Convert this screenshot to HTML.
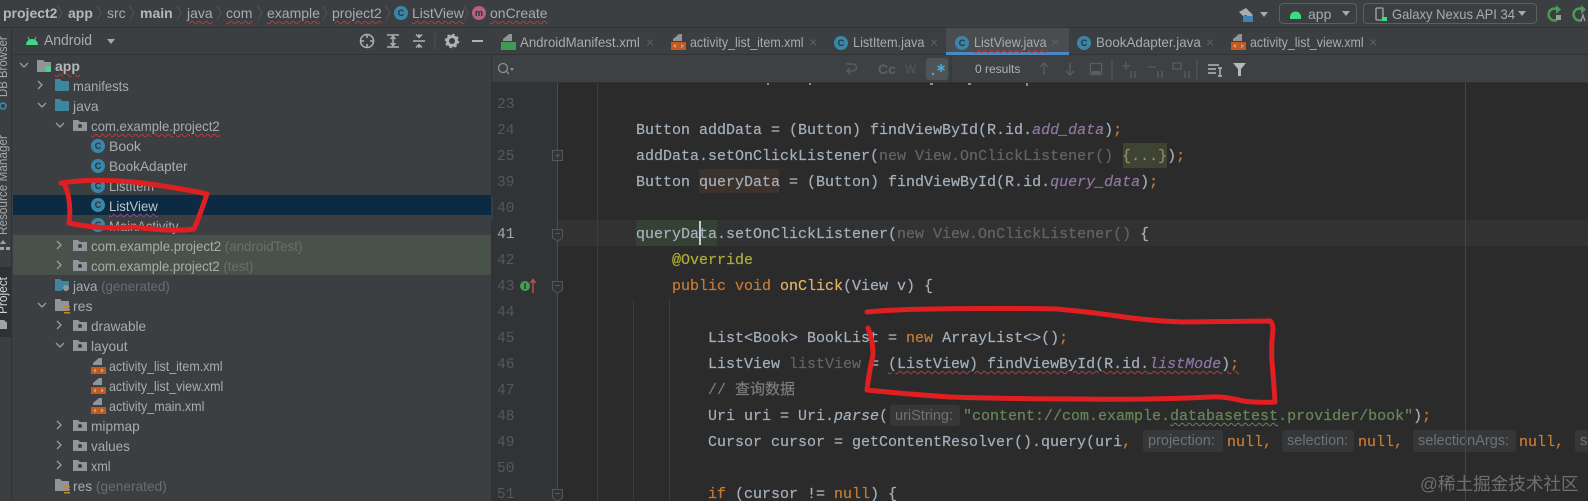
<!DOCTYPE html>
<html><head><meta charset="utf-8"><style>
*{box-sizing:border-box}
html{margin:0;padding:0;background:#3c3f41;width:1588px;height:501px;overflow:hidden}
body{margin:0;padding:0;background:#3c3f41;width:1588px;height:501px;overflow:hidden;position:relative;font-family:"Liberation Sans","Noto Sans CJK SC",sans-serif;font-size:13px;color:#b4b8ba}
.a{position:absolute;white-space:pre}
.bc{position:absolute;top:5px;line-height:16px;font-size:14px;color:#a8acae;white-space:pre}
.bc.b{font-weight:bold;color:#b4b8ba}
.w{text-decoration:underline wavy #b93a3a 1px;text-underline-offset:2px}
.r{position:absolute;line-height:20px;white-space:pre;font-size:14px;color:#a8acae;transform-origin:0 50%}
.g{color:#6a6e70}
.tab{position:absolute;top:33px;line-height:18px;font-size:14px;color:#a8acae;white-space:pre;transform-origin:0 50%}
.x{position:absolute;top:34px;color:#5d6062;font-size:14px;line-height:16px}
.c{position:absolute;left:0;top:0;font-family:"Liberation Mono","Noto Sans CJK SC",monospace;font-size:15px;line-height:26px;height:26px;color:#a4b0bc;white-space:pre;-webkit-text-stroke:.2px}
.k{color:#c67c38}.p{color:#8f77a5;font-style:italic}.s{color:#6a8759}.m{color:#e3b368}.an{color:#aeae3a}.d{color:#626466}.cm{color:#7c7c7c}.i{font-style:italic}
.n{position:absolute;left:497px;font-family:"Liberation Mono",monospace;font-size:14.5px;line-height:26px;color:#55595b}
.h{position:absolute;background:#353738;color:#6f7375;font:14.5px/22px "Liberation Sans",sans-serif;border-radius:3px;white-space:pre;height:22px;padding-left:5px}
.ci{position:absolute;width:14px;height:14px;border-radius:50%;background:#3a86a8;color:#27333a;font:bold 9px/14px "Liberation Sans",sans-serif;text-align:center}
svg{position:absolute;left:0;top:0}
</style></head><body>

<!-- panels -->
<div class="a" style="left:0;top:0;width:1588px;height:28px;background:#3c3f41;border-bottom:1px solid #323232"></div>
<div class="a" style="left:0;top:28px;width:12px;height:473px;background:#3c3f41;border-right:1px solid #323232"></div>
<div class="a" style="left:0;top:267px;width:12px;height:70px;background:#2f3133"></div>
<div class="a" style="left:13px;top:54px;width:478px;height:1px;background:#323232"></div>
<div class="a" style="left:13px;top:195px;width:478px;height:20px;background:#0c2a42"></div>
<div class="a" style="left:13px;top:235px;width:478px;height:40px;background:#49524a"></div>
<div class="a" style="left:491px;top:28px;width:1097px;height:473px;background:#2b2b2b;border-left:1px solid #323232"></div>
<div class="a" style="left:491px;top:28px;width:1097px;height:27px;background:#3c3f41;border-bottom:1px solid #323232"></div>
<div class="a" style="left:946px;top:28px;width:123px;height:27px;background:#4a4d4f;border-bottom:3px solid #4a88c7"></div>
<div class="a" style="left:492px;top:55px;width:1096px;height:28px;background:#3e4143;border-bottom:1px solid #323232"></div>
<div class="a" style="left:492px;top:83px;width:65px;height:418px;background:#313335"></div>
<div class="a" style="left:557px;top:220px;width:1031px;height:26px;background:#323232"></div>
<div class="a" style="left:636px;top:220px;width:81px;height:26px;background:#344134"></div>
<div class="a" style="left:699px;top:221px;width:1.5px;height:24px;background:#c9ccce"></div>
<div class="a" style="left:699px;top:169px;width:80px;height:24px;background:#3c312b"></div>
<div class="a" style="left:1123px;top:143px;width:44px;height:25px;background:#3f4334"></div>
<div class="a" style="left:557px;top:83px;width:1px;height:418px;background:#4a4c4e"></div>
<div class="a" style="left:597px;top:83px;width:1px;height:418px;background:#3b3d3e"></div>
<div class="a" style="left:633px;top:300px;width:1px;height:201px;background:#3b3d3e"></div>
<div class="a" style="left:669px;top:298px;width:1px;height:203px;background:#3b3d3e"></div>

<!-- breadcrumb -->
<span class="bc b" style="left:3px">project2</span>
<span class="bc b" style="left:68px">app</span>
<span class="bc" style="left:107px">src</span>
<span class="bc b" style="left:140px">main</span>
<span class="bc" style="left:187px"><span class="w">java</span></span>
<span class="bc" style="left:226px"><span class="w">com</span></span>
<span class="bc" style="left:267px"><span class="w">example</span></span>
<span class="bc" style="left:332px"><span class="w">project2</span></span>
<div class="ci" style="left:394px;top:6px">C</div>
<span class="bc" style="left:412px"><span class="w">ListView</span></span>
<div class="ci" style="left:472px;top:6px;background:#b5617b">m</div>
<span class="bc" style="left:490px"><span class="w">onCreate</span></span>

<!-- left strip -->
<div class="a" style="left:-3px;top:97px;transform-origin:0 0;transform:rotate(-90deg) scaleX(.91);font-size:12.5px;line-height:12px;color:#a4a8aa">DB Browser</div>
<div class="a" style="left:-3px;top:235px;transform-origin:0 0;transform:rotate(-90deg) scaleX(.94);font-size:12.5px;line-height:12px;color:#a4a8aa">Resource Manager</div>
<div class="a" style="left:-3px;top:314px;transform-origin:0 0;transform:rotate(-90deg) scaleX(.95);font-size:12.5px;line-height:12px;color:#d0d2d4">Project</div>

<!-- tool window header -->
<span class="a" style="left:44px;top:32px;font-size:14.5px;line-height:18px;color:#a8acae;transform-origin:0 50%;transform:scaleX(.96)">Android</span>

<!-- tree -->
<span class="r" style="left:55px;top:56px;font-weight:bold;color:#b4b8ba"><span class="w">app</span></span>
<span class="r" style="left:73px;top:76px;transform:scaleX(.93)">manifests</span>
<span class="r" style="left:73px;top:96px">java</span>
<span class="r" style="left:91px;top:116px;transform:scaleX(.94)"><span class="w">com.example.project2</span></span>
<span class="r" style="left:109px;top:136px">Book</span>
<span class="r" style="left:109px;top:156px;transform:scaleX(.97)">BookAdapter</span>
<span class="r" style="left:109px;top:176px;transform:scaleX(.92)">ListItem</span>
<span class="r" style="left:109px;top:196px;color:#c2c6c8;transform:scaleX(.94)"><span style="text-decoration:underline wavy #8e4a7a 1px;text-underline-offset:2px">ListView</span></span>
<span class="r" style="left:109px;top:216px;transform:scaleX(.93)">MainActivity</span>
<span class="r" style="left:91px;top:236px;transform:scaleX(.95)">com.example.project2 <span class="g">(androidTest)</span></span>
<span class="r" style="left:91px;top:256px;transform:scaleX(.94)">com.example.project2 <span class="g">(test)</span></span>
<span class="r" style="left:73px;top:276px;transform:scaleX(.95)">java <span class="g">(generated)</span></span>
<span class="r" style="left:73px;top:296px">res</span>
<span class="r" style="left:91px;top:316px;transform:scaleX(.97)">drawable</span>
<span class="r" style="left:91px;top:336px;transform:scaleX(.98)">layout</span>
<span class="r" style="left:109px;top:356px;transform:scaleX(.89)">activity_list_item.xml</span>
<span class="r" style="left:109px;top:376px;transform:scaleX(.89)">activity_list_view.xml</span>
<span class="r" style="left:109px;top:396px;transform:scaleX(.895)">activity_main.xml</span>
<span class="r" style="left:91px;top:416px;transform:scaleX(.98)">mipmap</span>
<span class="r" style="left:91px;top:436px;transform:scaleX(.96)">values</span>
<span class="r" style="left:91px;top:456px;transform:scaleX(.9)">xml</span>
<span class="r" style="left:73px;top:476px;transform:scaleX(.98)">res <span class="g">(generated)</span></span>
<div class="a" style="left:73px;top:496px;width:120px;height:5px;overflow:hidden;font-size:14px;line-height:20px;color:#a8acae">Gradle Scripts</div>

<div class="ci" style="left:91px;top:139px">C</div>
<div class="ci" style="left:91px;top:159px">C</div>
<div class="ci" style="left:91px;top:179px">C</div>
<div class="ci" style="left:91px;top:198px">C</div>
<div class="ci" style="left:91px;top:218px">C</div>

<!-- tabs -->
<span class="tab" style="left:520px;transform:scaleX(.945)">AndroidManifest.xml</span><span class="x" style="left:646px">×</span>
<span class="tab" style="left:690px;transform:scaleX(.89)">activity_list_item.xml</span><span class="x" style="left:809px">×</span>
<div class="ci" style="left:834px;top:36px">C</div><span class="tab" style="left:853px;transform:scaleX(.91)">ListItem.java</span><span class="x" style="left:930px">×</span>
<div class="ci" style="left:955px;top:36px">C</div><span class="tab" style="left:974px;transform:scaleX(.9)"><span class="w">ListView.java</span></span><span class="x" style="left:1051px">×</span>
<div class="ci" style="left:1077px;top:36px">C</div><span class="tab" style="left:1096px;transform:scaleX(.955)">BookAdapter.java</span><span class="x" style="left:1206px">×</span>
<span class="tab" style="left:1250px;transform:scaleX(.885)">activity_list_view.xml</span><span class="x" style="left:1369px">×</span>

<!-- right toolbar -->
<div class="a" style="left:1279px;top:3px;width:78px;height:21px;border:1px solid #5c5f61;border-radius:4px"></div>
<div class="a" style="left:1363px;top:3px;width:174px;height:21px;border:1px solid #5c5f61;border-radius:4px"></div>
<span class="a" style="left:1308px;top:5px;font-size:14px;line-height:18px;color:#a8acae">app</span>
<span class="a" style="left:1392px;top:5px;font-size:14px;line-height:18px;color:#a8acae;transform-origin:0 50%;transform:scaleX(.93)">Galaxy Nexus API 34</span>

<!-- find bar -->
<span class="a" style="left:878px;top:60px;font-size:14px;font-weight:bold;line-height:18px;color:#5c6062">Cc</span>
<span class="a" style="left:905px;top:60px;font-size:12px;font-weight:bold;line-height:18px;color:#4f5355">W</span>
<div class="a" style="left:926px;top:58px;width:22px;height:22px;background:#505456;border-radius:3px"></div>
<span class="a" style="left:975px;top:61px;font-size:12px;line-height:17px;color:#b0b4b6">0 results</span>

<!-- line numbers -->
<div class="n" style="top:92px">23</div><div class="n" style="top:118px">24</div><div class="n" style="top:144px">25</div>
<div class="n" style="top:170px">39</div><div class="n" style="top:196px">40</div>
<div class="n" style="top:222px;color:#a4a8aa">41</div>
<div class="n" style="top:248px">42</div><div class="n" style="top:274px">43</div><div class="n" style="top:300px">44</div>
<div class="n" style="top:326px">45</div><div class="n" style="top:352px">46</div><div class="n" style="top:378px">47</div>
<div class="n" style="top:404px">48</div><div class="n" style="top:430px">49</div><div class="n" style="top:456px">50</div><div class="n" style="top:482px">51</div>

<!-- code -->
<div class="c" style="left:636px;top:118px">Button addData = (Button) findViewById(R.id.<span class="p">add_data</span>)<span class="k">;</span></div>
<div class="c" style="left:636px;top:144px">addData.setOnClickListener(<span class="d">new View.OnClickListener() </span><span style="color:#8a8f6a">{...}</span>)<span class="k">;</span></div>
<div class="c" style="left:636px;top:170px">Button queryData = (Button) findViewById(R.id.<span class="p">query_data</span>)<span class="k">;</span></div>
<div class="c" style="left:636px;top:222px">queryData.setOnClickListener(<span class="d">new View.OnClickListener() </span>{</div>
<div class="c an" style="left:672px;top:248px">@Override</div>
<div class="c" style="left:672px;top:274px"><span class="k">public void </span><span class="m">onClick</span>(View v) {</div>
<div class="c" style="left:708px;top:326px">List&lt;Book&gt; BookList = <span class="k">new </span>ArrayList&lt;&gt;()<span class="k">;</span></div>
<div class="c" style="left:708px;top:352px">ListView <span class="d">listView</span> = <span style="text-decoration:underline wavy #b93a3a 1px;text-underline-offset:2px">(ListView) findViewById(R.id.<span class="p">listMode</span>)<span class="k">;</span></span></div>
<div class="c cm" style="left:708px;top:378px">// 查询数据</div>
<div class="c" style="left:708px;top:404px">Uri uri = Uri.<span class="i">parse</span>(</div>
<div class="h" style="left:890px;top:405px;width:70px;height:21px">uriString:</div>
<div class="c" style="left:963px;top:404px"><span class="s">"content://com.example.<span style="text-decoration:underline wavy #6f7f55 1px;text-underline-offset:2px">databasetest</span>.provider/book"</span>)<span class="k">;</span></div>
<div class="c" style="left:708px;top:430px">Cursor cursor = getContentResolver().query(uri<span class="k">,</span></div>
<div class="h" style="left:1143px;top:430px;width:80px">projection:</div>
<div class="c k" style="left:1227px;top:430px">null,</div>
<div class="h" style="left:1282px;top:430px;width:72px">selection:</div>
<div class="c k" style="left:1358px;top:430px">null,</div>
<div class="h" style="left:1413px;top:430px;width:103px">selectionArgs:</div>
<div class="c k" style="left:1519px;top:430px">null,</div>
<div class="h" style="left:1575px;top:430px;width:13px;overflow:hidden">se</div>
<div class="c" style="left:708px;top:482px;height:19px;overflow:hidden"><span class="k">if</span> (cursor != <span class="k">null</span>) {</div>
<div class="a" style="left:1465px;top:83px;width:1px;height:418px;background:#444648"></div>

<span class="a" style="left:1420px;top:473px;font-size:17.6px;line-height:22px;color:#6d6f71;font-family:'Liberation Sans','Noto Sans CJK SC',sans-serif">@稀土掘金技术社区</span>

<svg width="1588" height="501" viewBox="0 0 1588 501" fill="none">
<!-- breadcrumb chevrons -->
<path d="M58 6l4 7-4 7M97 6l4 7-4 7M130 6l4 7-4 7M177 6l4 7-4 7M217 6l4 7-4 7M258 6l4 7-4 7M323 6l4 7-4 7M386 6l4 7-4 7M464 6l4 7-4 7" stroke="#525557"/>
<!-- tree chevrons -->
<g stroke="#9a9ea0" stroke-width="1.3">
<path d="M20 63l4 4 4-4M38 81l4 4-4 4M38 103l4 4 4-4M56 123l4 4 4-4M57 241l4 4-4 4M57 261l4 4-4 4M38 303l4 4 4-4M57 321l4 4-4 4M56 343l4 4 4-4M57 421l4 4-4 4M57 441l4 4-4 4M57 461l4 4-4 4"/>
</g>
<!-- folders -->
<g fill="#8f9599">
<path d="M37 60h6l2 2h6v10h-14z"/>
<path d="M73 120h5l2 2h7v9H73zM73 240h5l2 2h7v9H73zM73 260h5l2 2h7v9H73zM73 320h5l2 2h7v9H73zM73 340h5l2 2h7v9H73zM73 420h5l2 2h7v9H73zM73 440h5l2 2h7v9H73zM73 460h5l2 2h7v9H73z"/>
<path d="M55 299h5l2 2h7v10H55zM55 479h5l2 2h7v10H55z"/>
</g>
<g fill="#3c3f41"><circle cx="80" cy="126" r="2"/><circle cx="80" cy="246" r="2"/><circle cx="80" cy="266" r="2"/><circle cx="80" cy="326" r="2"/><circle cx="80" cy="346" r="2"/><circle cx="80" cy="426" r="2"/><circle cx="80" cy="446" r="2"/><circle cx="80" cy="466" r="2"/></g>
<circle cx="48" cy="69" r="3" fill="#3ddc84"/>
<g fill="#3e86a0">
<path d="M55 79h5l2 2h7v10H55z"/><path d="M55 99h5l2 2h7v10H55z"/><path d="M55 279h5l2 2h7v6h-4l-4 4h-6z"/>
</g>
<circle cx="66" cy="288" r="3" fill="#8a9a9a"/>
<g fill="#c28a32"><rect x="64" y="306" width="6" height="1.5"/><rect x="64" y="309" width="6" height="1.5"/><rect x="64" y="312" width="6" height="1.5"/><rect x="64" y="486" width="6" height="1.5"/><rect x="64" y="489" width="6" height="1.5"/><rect x="64" y="492" width="6" height="1.5"/></g>
<!-- xml file icons -->
<g fill="#8f9599"><path d="M99 358h3v7h-9v-2z"/><path d="M99 378h3v7h-9v-2z"/><path d="M99 398h3v7h-9v-2z"/><path d="M679 34h3v7h-9v-2z"/><path d="M1239 34h3v7h-9v-2z"/><path d="M509 34h3v7h-9v-2z"/></g>
<g fill="#c05a25"><rect x="91" y="367" width="15" height="7"/><rect x="91" y="387" width="15" height="7"/><rect x="91" y="407" width="15" height="7"/><rect x="671" y="42" width="15" height="8"/><rect x="1231" y="42" width="15" height="8"/></g>
<rect x="501" y="42" width="15" height="8" fill="#3f9a55"/>
<g stroke="#e8b89a" stroke-width=".8"><path d="M96 369l-2 1.500 2 1.500M101 369l2 1.500-2 1.500M96 389l-2 1.500 2 1.500M101 389l2 1.500-2 1.500M96 409l-2 1.500 2 1.500M101 409l2 1.500-2 1.500M676 44.500l-2 1.500 2 1.500M681 44.500l2 1.500-2 1.500M1236 44.500l-2 1.500 2 1.500M1241 44.500l2 1.500-2 1.500"/></g>
<!-- left strip icons -->
<circle cx="3" cy="106" r="3" stroke="#3d8fb8" stroke-width="1.5"/>
<path d="M3 240l-3 4h6zM0 247h4v3H0zM6 247h4v3H6z" fill="#a0a4a6"/>
<path d="M0 320h4l2 2h1v7H0z" fill="#a0a4a6"/>
<!-- android icon header -->
<path d="M26 45a6 6 0 0 1 12 0z" fill="#3ddc84"/><path d="M28 37l1.500 3M36 37l-1.500 3" stroke="#3ddc84"/>
<path d="M107 39h8l-4 5z" fill="#a6aaac"/>
<!-- tool header icons -->
<g stroke="#aeb2b4" stroke-width="1.5">
<circle cx="367" cy="41" r="6.500"/><path d="M367 34v4M367 44v4M360 41h4M370 41h4"/>
<path d="M387 35h12M387 47h12M393 37v8M390.500 39l2.500-2.500 2.500 2.500M390.500 43l2.500 2.500 2.500-2.500"/>
<path d="M413 41h12M419 34v3M419 48v-3M416 34.500l3 3 3-3M416 47.500l3-3 3 3"/>
<path d="M472 41h11" stroke-width="2"/>
</g>
<path d="M435 33v16" stroke="#505355"/>
<circle cx="452" cy="41" r="4.500" stroke="#aeb2b4" stroke-width="3"/>
<circle cx="452" cy="41" r="6.500" stroke="#aeb2b4" stroke-width="1.500" stroke-dasharray="2.500 2.600"/>
<!-- find bar icons -->
<circle cx="503" cy="68" r="4.500" stroke="#8b8f91" stroke-width="1.300"/><path d="M506 71l3 3" stroke="#8b8f91" stroke-width="1.300"/><path d="M510 68h4l-2 3z" fill="#8b8f91"/>
<path d="M846 64h7a3 3 0 0 1 0 7h-5M850 68l-3 3 3 3" stroke="#5c6062" stroke-width="1.300"/>
<path d="M941 64v8M937.500 66l7 4M944.500 66l-7 4" stroke="#3fb0e0" stroke-width="1.500"/><circle cx="933" cy="74" r="1.200" fill="#3fb0e0"/>
<g stroke="#5a5e60" stroke-width="1.300">
<path d="M1044 75v-12M1040 67l4-4 4 4M1070 63v12M1066 71l4 4 4-4"/>
<rect x="1090.500" y="63.500" width="11" height="11"/><rect x="1092" y="71" width="8" height="3" fill="#5a5e60" stroke="none"/>
<path d="M1122 66h8M1126 62v8M1148 67h8M1173 63h8v6h-8zM1131 71v7M1135 71v7M1158 71v7M1162 71v7M1185 71v7M1189 71v7"/>
<path d="M1112 59v21M1197 59v21" stroke="#505355"/>
</g>
<path d="M951 56v27" stroke="#323232"/>
<g stroke="#b4b8ba" stroke-width="1.400"><path d="M1208 65h11M1208 69h8M1208 73h8M1220 68v8M1218 68h4M1218 76h4"/></g>
<path d="M1233 63h13l-5 6v7h-3v-7z" fill="#b4b8ba"/>
<!-- top toolbar icons -->
<path d="M1239 12l7-4 7 7-3 3-4-3-3 1z" fill="#a9adaf"/><rect x="1243" y="16" width="10" height="6" fill="#3d84b8"/>
<path d="M1260 12h8l-4 5zM1342 11h8l-4 5zM1518 11h8l-4 5z" fill="#a6aaac"/>
<path d="M1290 17a5.500 5.500 0 0 1 11 0v2h-11z" fill="#3ddc84"/>
<rect x="1376" y="8" width="7" height="12" rx="1" stroke="#a4a8aa" stroke-width="1.300"/><rect x="1382" y="17" width="5" height="4" fill="#3ddc84"/>
<path d="M1557 20a6 6 0 1 1 0-11" stroke="#499c54" stroke-width="2.500"/><path d="M1556 5l5 4.500-5 4.500z" fill="#499c54"/><rect x="1556" y="15" width="5" height="5" fill="#9a9ea0"/>
<path d="M1582 20a6 6 0 1 1 0-11" stroke="#499c54" stroke-width="2.500"/><path d="M1581 5l5 4.500-5 4.500z" fill="#499c54"/><path d="M1581 21l2-6 2 6" stroke="#9a9ea0" stroke-width="1.300"/>
<!-- fold markers -->
<g stroke="#55585a" fill="#313335">
<rect x="552.500" y="150.500" width="10" height="10"/><path d="M555 155.500h5M557.500 153v5"/>
<path d="M552.500 229.500h10v8l-5 4-5-4z"/><path d="M555 233.500h5"/>
<path d="M552.500 281.500h10v8l-5 4-5-4z"/><path d="M555 285.500h5"/>
<path d="M552.500 489.500h10v8l-5 4-5-4z"/><path d="M555 493.500h5"/>
</g>
<circle cx="525" cy="286" r="5" fill="#499c54"/><path d="M525 283v6" stroke="#20301f" stroke-width="1.300"/>
<path d="M533 293v-13M530.500 283l2.500-3.500 2.500 3.500" stroke="#c75450" stroke-width="1.300"/>
<path d="M492 196v25" stroke="#2e4a66"/>
<!-- line 22 descender fragments -->
<g fill="#8a8f95"><rect x="767" y="83" width="2" height="2"/><rect x="809" y="83" width="2" height="2"/><rect x="930" y="83" width="3" height="2"/><rect x="968" y="83" width="3" height="2"/></g><rect x="1026" y="83" width="2" height="3" fill="#c67c38"/>
<!-- red annotations -->
<g stroke="#e01f22" stroke-width="5" stroke-linecap="round" stroke-linejoin="round">
<path d="M61 183Q100 177 150 184Q190 190 207 194Q200 215 194 229Q175 232 133 227Q100 230 69 223Q72 200 64 183"/>
<path d="M867 312Q900 309 933 309Q1000 308 1057 309Q1090 312 1117 316Q1150 321 1183 322L1270 321Q1273 323 1273 330Q1271 345 1272 362Q1274 385 1275 402Q1258 403 1243 401Q1225 396 1210 397Q1150 400 1083 399Q1010 399 950 397Q905 394 867 390Q869 372 873 355Q873 340 868 328"/>
</g>
</svg>
</body></html>
